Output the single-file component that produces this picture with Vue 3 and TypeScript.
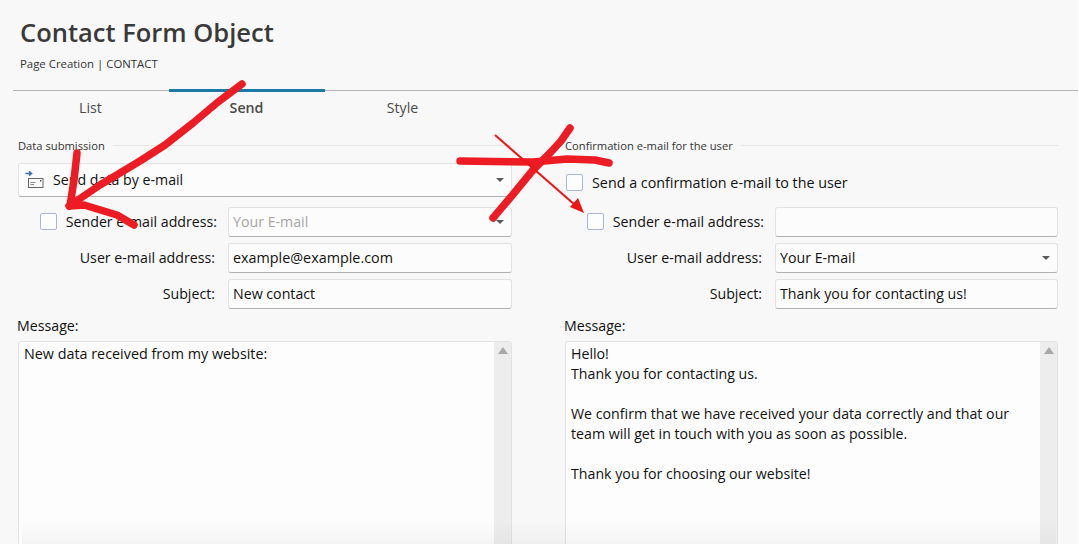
<script setup lang="ts">
const tabs = [
  { label: 'List', active: false },
  { label: 'Send', active: true },
  { label: 'Style', active: false },
]
const confirmation = [
  'Hello!',
  'Thank you for contacting us.',
  '',
  'We confirm that we have received your data correctly and that our',
  'team will get in touch with you as soon as possible.',
  '',
  'Thank you for choosing our website!',
]
</script>

<template>
  <div class="page">
    <header class="head">
      <h1>Contact Form Object</h1>
      <p>Page Creation | CONTACT</p>
    </header>
    <nav class="tabs">
      <div v-for="t in tabs" :key="t.label" class="tab" :class="{ active: t.active }">{{ t.label }}</div>
    </nav>
    <main class="columns">
      <section class="col">
        <div class="legend"><span>Data submission</span><i></i></div>
        <div class="box combo big">
          <svg class="mail" width="20" height="18" viewBox="0 0 20 18">
            <path d="M0.5 2.5h5.5M4 0.3l2.5 2.2-2.5 2.2" fill="none" stroke="#3f6fb5" stroke-width="1.6" />
            <rect x="3.5" y="7.5" width="14.5" height="9" fill="#fbfbfb" stroke="#666" />
            <path d="M5.5 11.5h5M5.5 13.5h3.5" stroke="#888" />
            <rect x="15" y="9" width="1.5" height="1.5" fill="#555" />
          </svg>
          <span class="grow">Send data by e-mail</span>
          <b class="caret"></b>
        </div>
        <div class="rows">
          <div class="lab sender"><span class="check"></span><span>Sender e-mail address:</span></div>
          <div class="box combo off"><span class="grow">Your E-mail</span><b class="caret"></b></div>
          <div class="lab">User e-mail address:</div>
          <div class="box wide">example@example.com</div>
          <div class="lab">Subject:</div>
          <div class="box">New contact</div>
        </div>
        <div class="msg-label">Message:</div>
        <div class="area">
          <div class="area-text wide"><div>New data received from my website:</div></div>
          <div class="scroll"><b></b></div>
        </div>
      </section>

      <section class="col right">
        <div class="legend"><span>Confirmation e-mail for the user</span><i></i></div>
        <div class="confirm"><span class="check"></span><span>Send a confirmation e-mail to the user</span></div>
        <div class="rows">
          <div class="lab sender"><span class="check"></span><span>Sender e-mail address:</span></div>
          <div class="box"></div>
          <div class="lab">User e-mail address:</div>
          <div class="box combo"><span class="grow">Your E-mail</span><b class="caret"></b></div>
          <div class="lab">Subject:</div>
          <div class="box">Thank you for contacting us!</div>
        </div>
        <div class="msg-label">Message:</div>
        <div class="area">
          <div class="area-text">
            <div v-for="(l, i) in confirmation" :key="i" class="line">{{ l }}</div>
          </div>
          <div class="scroll"><b></b></div>
        </div>
      </section>
    </main>

    <svg class="marks" width="1079" height="544" viewBox="0 0 1079 544">
      <g fill="none" stroke="#ed1c24" stroke-width="7.5" stroke-linecap="round" stroke-linejoin="round">
        <path d="M242 84 L218 102 L193 123 L165 145 L140 161 L100 185 L69 206" />
        <path d="M77 153 L74 180 L70 206 L84 205 L117 215 L134 225" />
        <path d="M460 161 L533 162 L567 159 L595 160 L609 163" />
        <path d="M570 128 L561 141 L550 153 L533 170 L510 198 L493 218" />
      </g>
      <path d="M495 135 L575 205" stroke="#f01414" stroke-width="2" />
      <path d="M584 213 L570 207 L578 198 Z" fill="#f01414" />
    </svg>
    <div class="fade"></div>
  </div>
</template>

<style>
html, body { margin: 0; background: #f8f8f8; }
</style>

<style scoped>
.page {
  position: relative;
  width: 1079px;
  height: 544px;
  box-sizing: border-box;
  border-right: 1px solid #fff;
  overflow: hidden;
  background: #f8f8f8;
  color: #111;
  font-family: "Open Sans", "Noto Sans", sans-serif;
  font-size: 14.2px;
}
.head { height: 90px; padding-left: 20px; box-sizing: border-box; }
.head h1 {
  margin: 0;
  padding-top: 14px;
  font-size: 25.5px;
  line-height: 36px;
  font-weight: 600;
  color: #3a3a3a;
}
.head p { margin: 0; padding-top: 5px; font-size: 11.4px; line-height: 18px; color: #333; }
.tabs {
  display: flex;
  margin-left: 13px;
  border-top: 1px solid #b4b4b4;
  height: 35px;
}
.tab {
  width: 156px;
  margin-top: -2px;
  padding-top: 6px;
  padding-right: 1px;
  box-sizing: border-box;
  border-top: 3px solid transparent;
  text-align: center;
  color: #4a4a4a;
  line-height: 20px;
}
.tab.active { border-top-color: #1a7aa3; font-weight: 600; }
.columns { display: flex; gap: 53px; padding: 9px 0 0 18px; }
.col { width: 494px; flex: none; }
.col.right { width: 493px; }
.legend {
  display: flex;
  align-items: center;
  gap: 8px;
  height: 20px;
  font-size: 11.2px;
  color: #333;
}
.legend i { flex: 1; height: 1px; background: #e6e6e6; }
.box {
  display: flex;
  align-items: center;
  height: 30px;
  box-sizing: border-box;
  padding: 0 4px 2px;
  background: #fcfcfc;
  border: 1px solid #e2e2e6;
  border-bottom-color: #b0b0b0;
  border-radius: 3px;
  white-space: nowrap;
}
.wide { font-size: 14.35px; }
.big { height: 34px; margin-top: 8px; padding-left: 6px; }
.mail { margin-right: 8px; flex: none; margin-top: 2px; }
.grow { flex: 1; }
.off { color: #a5a5a5; }
.caret {
  width: 0;
  height: 0;
  margin-right: 3px;
  margin-top: 2px;
  border-left: 4px solid transparent;
  border-right: 4px solid transparent;
  border-top: 4px solid #5a5a5a;
}
.rows {
  display: grid;
  grid-template-columns: 210px 1fr;
  grid-auto-rows: 30px;
  row-gap: 6px;
  margin-top: 10px;
}
.lab {
  display: flex;
  align-items: center;
  justify-content: flex-end;
  padding: 0 13px 2px 0;
  white-space: nowrap;
}
.sender { padding-right: 11px; gap: 9px; }
.check {
  display: block;
  flex: none;
  width: 17px;
  height: 17px;
  margin-top: 1px;
  box-sizing: border-box;
  background: #fdfdfd;
  border: 1px solid #a9b6d3;
  border-radius: 2px;
}
.confirm {
  display: flex;
  align-items: center;
  gap: 9px;
  height: 34px;
  margin-top: 8px;
  padding: 5px 0 0 1px;
  box-sizing: border-box;
  font-size: 14.32px;
}
.confirm .check { margin-top: 0; }
.msg-label { margin-top: 8px; height: 24px; line-height: 18px; margin-left: -1px; }
.area {
  display: flex;
  height: 240px;
  box-sizing: border-box;
  background: #fdfdfd;
  border: 1px solid #e2e2e6;
  border-radius: 3px;
}
.area-text { flex: 1; padding: 2px 5px; line-height: 20px; }
.line { min-height: 20px; white-space: nowrap; }
.scroll { width: 17px; background: #ededed; display: flex; justify-content: center; }
.scroll b {
  width: 0;
  height: 0;
  margin-top: 5px;
  border-left: 5px solid transparent;
  border-right: 5px solid transparent;
  border-bottom: 7px solid #a8a8a8;
}
.marks { position: absolute; left: 0; top: 0; pointer-events: none; }
.fade {
  position: absolute;
  left: 22px;
  right: 22px;
  bottom: 0;
  height: 24px;
  background: linear-gradient(to bottom, rgba(0,0,0,0), rgba(0,0,0,0.035));
}
</style>
